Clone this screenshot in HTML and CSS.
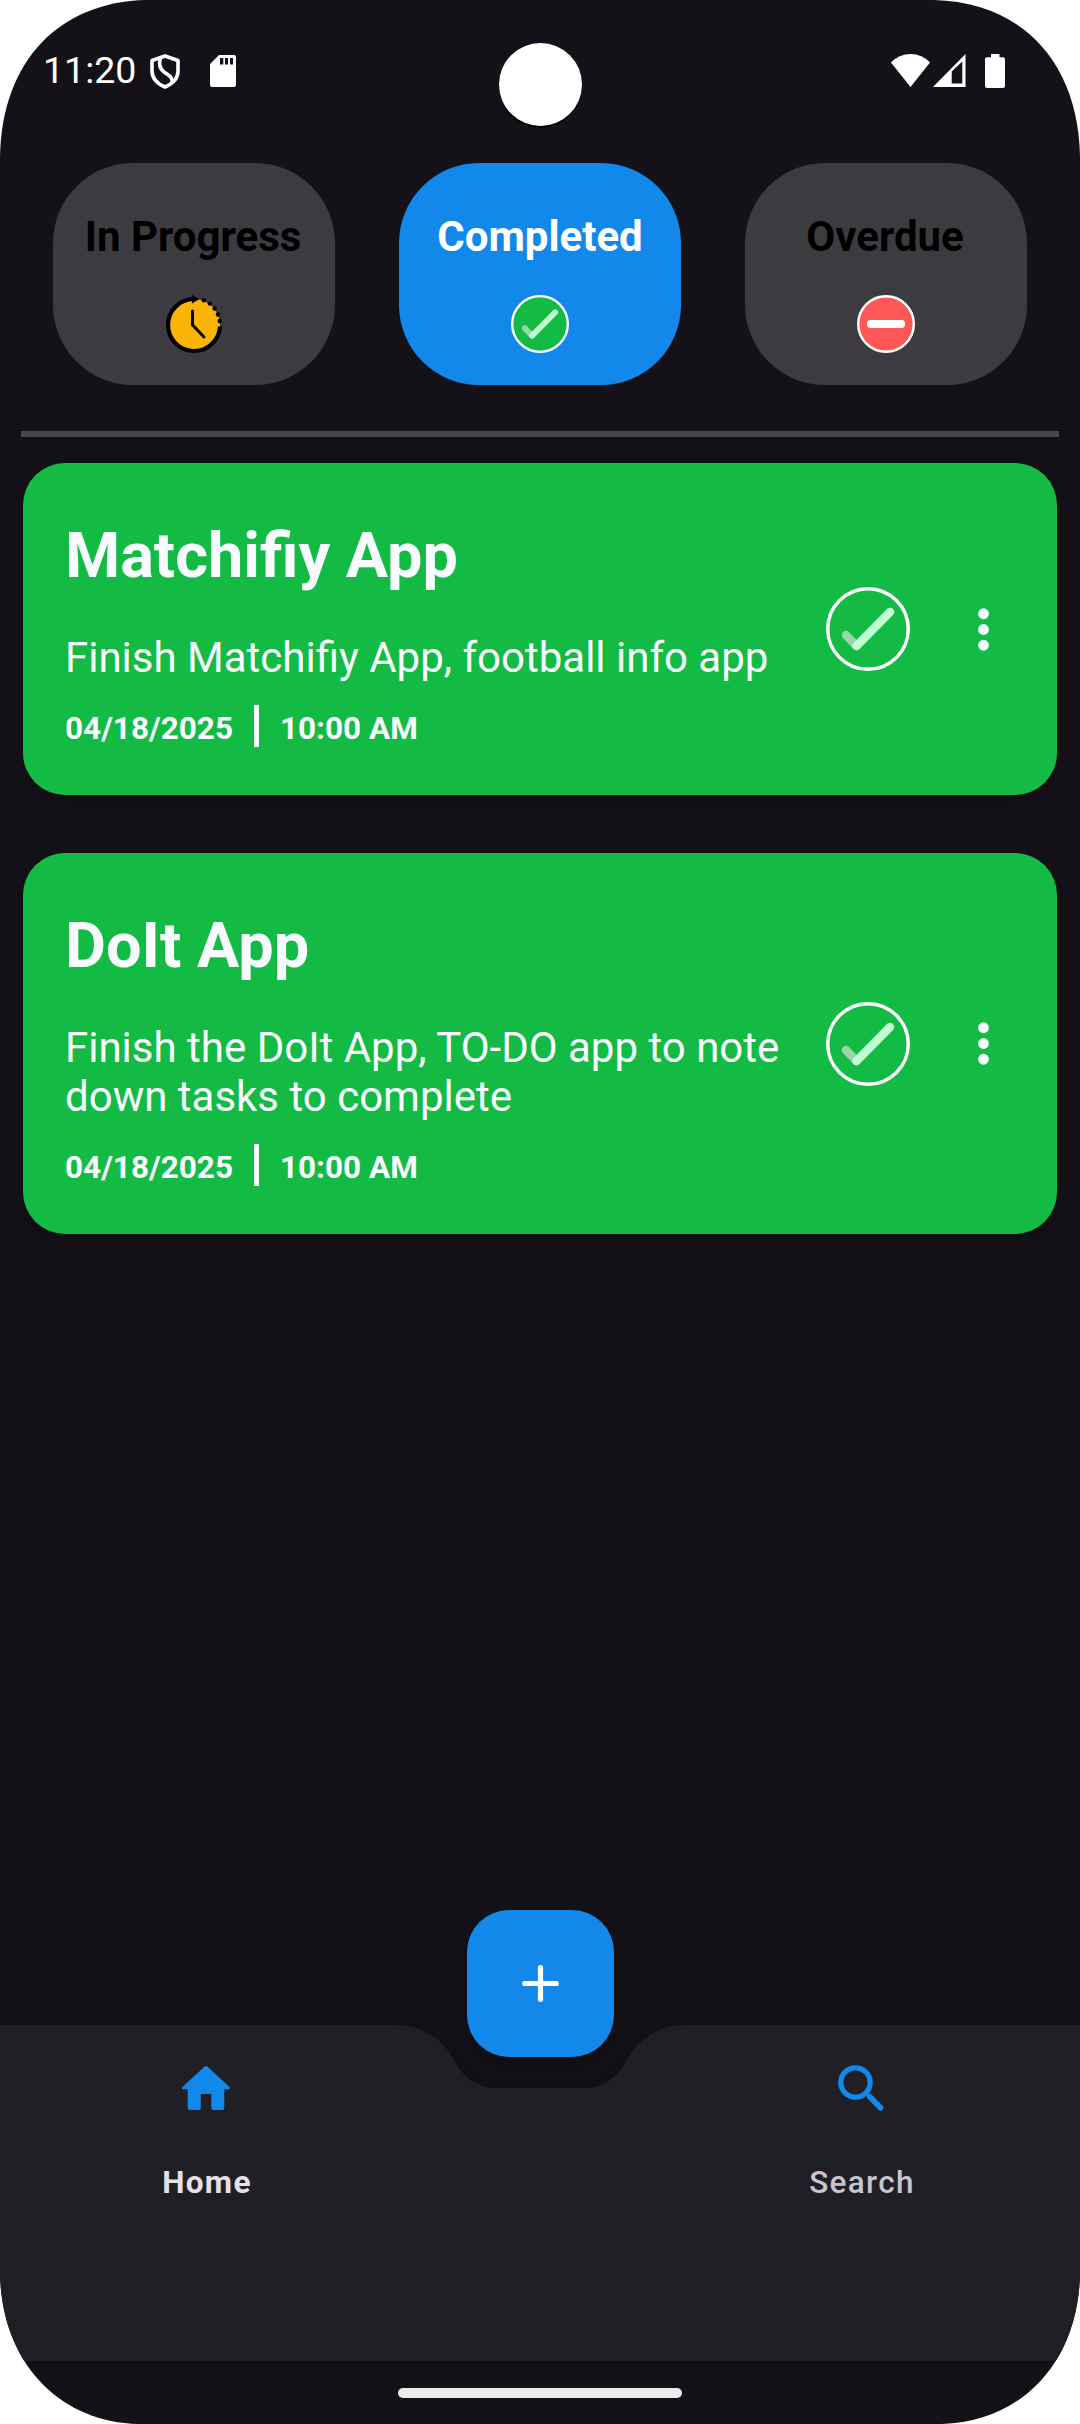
FILE: index.html
```html
<!DOCTYPE html>
<html lang="en">
<head>
<meta charset="utf-8">
<title>DoIt</title>
<link rel="stylesheet" href="styles.css">
</head>
<body>
<div class="screen">
  <header class="status">
    <div class="status-left">
      <span class="clock">11:20</span>
      <svg class="shield" width="30" height="36" viewBox="0 0 30 36" fill="none" stroke="#fff" stroke-width="3.6" stroke-linejoin="round"><path d="M15 2 L28 6.500 V17 C28 25 22 30 15 33 C8 30 2 25 2 17 V6.500 Z"/><path d="M10.500 4 C8.500 10 9.500 14.500 14 18 C19.500 21.500 22.500 23 22 28"/></svg>
      <svg class="sd" width="26" height="32" viewBox="0 0 26 32"><path fill="#fff" fill-rule="evenodd" d="M9 0 H24 Q26 0 26 2 V30 Q26 32 24 32 H2 Q0 32 0 30 V9 Z M10 3 V9.500 H13.300 V3 Z M15 3 V9.500 H18 V3 Z M20 3 V9.500 H23 V3 Z"/></svg>
    </div>
    <div class="camera"></div>
    <div class="status-right">
      <svg width="39" height="33" viewBox="0 0 39 33"><path fill="#fff" d="M0 8.500 Q8 0 19.500 0 Q31 0 39 8.500 L19.500 33 Z"/></svg>
      <svg class="signal" width="33" height="33" viewBox="0 0 33 33"><path fill="#fff" fill-rule="evenodd" d="M0 33 L32.500 0 V33 Z M18.700 17.500 V29.500 H29.300 V7.500 Z"/></svg>
      <svg class="battery" width="20" height="34" viewBox="0 0 20 34"><path fill="#fff" d="M6 0 H14.500 V3.300 H18 Q20 3.300 20 5.300 V32 Q20 34 18 34 H2 Q0 34 0 32 V5.300 Q0 3.300 2 3.300 H6 Z"/></svg>
    </div>
  </header>

  <nav class="tabs">
    <div class="tab">
      <span class="tab-title">In Progress</span>
      <svg width="58" height="58" viewBox="0 0 58 58" fill="none" stroke="#000" stroke-linecap="round">
        <circle cx="29" cy="30" r="26" fill="#fbb305" stroke="none"/>
        <path stroke-width="4.200" stroke-linecap="butt" d="M55 31.500 A26 26 0 1 1 29 4"/>
        <path fill="#000" stroke="none" d="M27 0 L34.500 4 L27 8.500 Z"/>
        <path stroke-width="3" stroke-linejoin="round" d="M27.500 16 V30 L39 42"/>
        <g fill="#000" stroke="none"><circle cx="38.800" cy="5.300" r="2.200"/><circle cx="44.800" cy="8.600" r="2.200"/><circle cx="49.600" cy="13.500" r="2.200"/><circle cx="52.900" cy="19.500" r="2.200"/><circle cx="54.700" cy="26" r="2.200"/></g>
      </svg>
    </div>
    <div class="tab active">
      <span class="tab-title">Completed</span>
      <svg width="58" height="58" viewBox="0 0 84 84"><use href="#done"/></svg>
    </div>
    <div class="tab">
      <span class="tab-title">Overdue</span>
      <svg width="58" height="58" viewBox="0 0 58 58"><circle cx="29" cy="29" r="27.800" fill="#ff5757" stroke="#fff" stroke-width="2.400"/><rect x="10" y="25" width="38" height="8" rx="3.500" fill="#fff"/></svg>
    </div>
  </nav>

  <div class="divider"></div>

  <main class="tasks">
    <article class="task">
      <div class="info">
        <h2>Matchifiy App</h2>
        <p>Finish Matchifiy App, football info app</p>
        <div class="when"><span>04/18/2025</span><i></i><span>10:00 AM</span></div>
      </div>
      <svg width="84" height="84" viewBox="0 0 84 84">
        <g id="done">
          <circle cx="42" cy="42" r="40.300" fill="#13bb45" stroke="#fff" stroke-width="3.400"/>
          <path d="M20 48 L30.500 59" stroke="#97d6a9" stroke-width="8.500" stroke-linecap="round"/>
          <path d="M30.500 59 L64 25" stroke="#bfffd2" stroke-width="8.500" stroke-linecap="round"/>
        </g>
      </svg>
      <svg class="more" width="63" height="63" viewBox="0 0 24 24" fill="#f8fcff"><circle cx="12" cy="6" r="2.050"/><circle cx="12" cy="12" r="2.050"/><circle cx="12" cy="18" r="2.050"/></svg>
    </article>
    <article class="task">
      <div class="info">
        <h2>DoIt App</h2>
        <p>Finish the DoIt App, TO-DO app to note down tasks to complete</p>
        <div class="when"><span>04/18/2025</span><i></i><span>10:00 AM</span></div>
      </div>
      <svg width="84" height="84" viewBox="0 0 84 84"><use href="#done"/></svg>
      <svg class="more" width="63" height="63" viewBox="0 0 24 24" fill="#f8fcff"><circle cx="12" cy="6" r="2.050"/><circle cx="12" cy="12" r="2.050"/><circle cx="12" cy="18" r="2.050"/></svg>
    </article>
  </main>

  <footer class="bottom-bar">
    <svg class="bar-shape" width="1080" height="336" viewBox="0 0 1080 336"><path fill="#211f26" d="M0 0 H397 A64 64 0 0 1 453.500 34 C463 53 478 63 497 63 H583.500 C603 63 618 53 627.500 34 A64 64 0 0 1 684 0 H1080 V336 H0 Z"/></svg>
    <div class="fab"><svg width="37" height="37" viewBox="0 0 37 37" stroke="#fff" stroke-width="5.200" stroke-linecap="round"><path d="M18.500 2.700 V34.300 M2.700 18.500 H34.300"/></svg></div>
    <div class="nav-item selected">
      <svg width="48" height="44" viewBox="0 0 48 44"><path fill="#1388eb" d="M22.500 .7 Q24 -.6 25.500 .7 L47.300 20.800 Q49 23 46.600 23.200 H42.300 V42 Q42.300 44 40.300 44 H31.500 Q29.300 44 29.300 42 V28 H18.800 V42 Q18.800 44 16.800 44 H7.700 Q5.700 44 5.700 42 V23.200 H1.400 Q-1 23 .7 20.800 Z"/></svg>
      <span>Home</span>
    </div>
    <div class="nav-item">
      <svg width="46" height="46" viewBox="0 0 46 46" fill="none" stroke="#1388eb"><circle cx="17.500" cy="17.500" r="14.700" stroke-width="5.200"/><path stroke-width="5.800" stroke-linecap="round" d="M31.500 31.500 L42.500 42.700"/></svg>
      <span>Search</span>
    </div>
  </footer>
  <div class="gesture"><div class="handle"></div></div>
</div>
</body>
</html>
```
FILE: styles.css
```css
* { box-sizing: border-box; }

body {
  margin: 0;
  background: #fff;
  font-family: Roboto, "Liberation Sans", sans-serif;
}

svg { display: block; flex: none; overflow: visible; }

.screen {
  display: flex;
  flex-direction: column;
  width: 1080px;
  height: 2424px;
  overflow: hidden;
  background: #141218;
  clip-path: path("M0 156 C2 60 60 2 146 0 H934 C1020 2 1078 60 1080 156 V2274 C1078 2364 1020 2422 942 2424 H138 C60 2422 2 2364 0 2274 Z");
}

.status {
  display: grid;
  grid-template-columns: 1fr 83px 1fr;
  height: 163px;
  padding: 43px 75px 0 43px;
}

.status-left, .status-right { display: flex; align-items: flex-start; }
.status-left { padding-top: 5px; }
.status-right { justify-content: flex-end; padding-top: 11px; }
.clock { width: 107px; font-size: 37.500px; line-height: 44px; color: #fff; }
.shield { margin-top: 6px; }
.sd { margin: 7px 0 0 30px; }
.signal { margin-left: 3px; }
.battery { margin-left: 19px; }

.camera {
  width: 83px;
  height: 83px;
  border-radius: 50%;
  background: #fff;
  box-shadow: 0 2px 0 #000;
  transform: translateX(16px);
}

.tabs { display: flex; gap: 64px; padding: 0 53px; }

.tab {
  display: flex;
  flex: 1;
  flex-direction: column;
  align-items: center;
  gap: 34px;
  height: 222px;
  padding-top: 49px;
  border-radius: 80px;
  background: #3d3a40;
  color: #000;
}

.tab.active { background: #1388eb; color: #fff; }
.tab-title { font-size: 42px; font-weight: 700; line-height: 49px; }
.tab:not(.active) .tab-title { padding-right: 2px; }

.divider { height: 6px; margin: 46px 21px 26px; background: #49454f; }

.tasks { display: flex; flex: 1; flex-direction: column; gap: 58px; padding: 0 23px; }

.task {
  display: flex;
  align-items: center;
  gap: 42px;
  padding: 56px 42px 48px;
  border-radius: 42px;
  background: #13bb45;
  box-shadow: 0 5px 16px rgba(0, 0, 0, .3);
  color: #f8fcff;
}

/* Icons are centred on the whole card rather than on its padded content. */
.task > svg { transform: translateY(-4px); }
.info { width: 719px; }
.info h2 { margin: 0 0 40px; font-size: 63px; font-weight: 700; line-height: 74px; }
.info p { margin: 0 0 23px; font-size: 42px; line-height: 49px; }

.when { display: flex; align-items: flex-end; height: 42px; font-size: 31.500px; font-weight: 700; line-height: 37px; }
.when i { width: 5px; height: 42px; margin: 0 21px; background: #f8fcff; }

.bottom-bar {
  position: relative;
  display: grid;
  grid-template-columns: 412px 238px 422px;
  height: 336px;
}

.bar-shape { position: absolute; inset: 0; filter: drop-shadow(0 0 7px rgba(0, 0, 0, .35)); }

.fab {
  position: absolute;
  top: -115px;
  left: 467px;
  display: grid;
  place-items: center;
  width: 147px;
  height: 147px;
  border-radius: 42px;
  background: #1388eb;
  box-shadow: 0 8px 20px rgba(0, 0, 0, .3);
}

.nav-item {
  position: relative;
  display: flex;
  grid-column: 3;
  flex-direction: column;
  align-items: center;
  justify-content: space-between;
  height: 176px;
  padding-top: 40px;
  font-size: 31.500px;
  font-weight: 500;
  line-height: 37px;
  letter-spacing: 1.300px;
  color: #cac4d0;
}

.nav-item span { padding-left: 2px; }
.nav-item.selected { grid-column: 1; padding-top: 41px; font-weight: 700; color: #e6e0e9; }

.gesture { display: flex; align-items: flex-start; justify-content: center; height: 63px; padding-top: 27px; }
.handle { width: 284px; height: 10px; border-radius: 5px; background: #ececec; }
```
